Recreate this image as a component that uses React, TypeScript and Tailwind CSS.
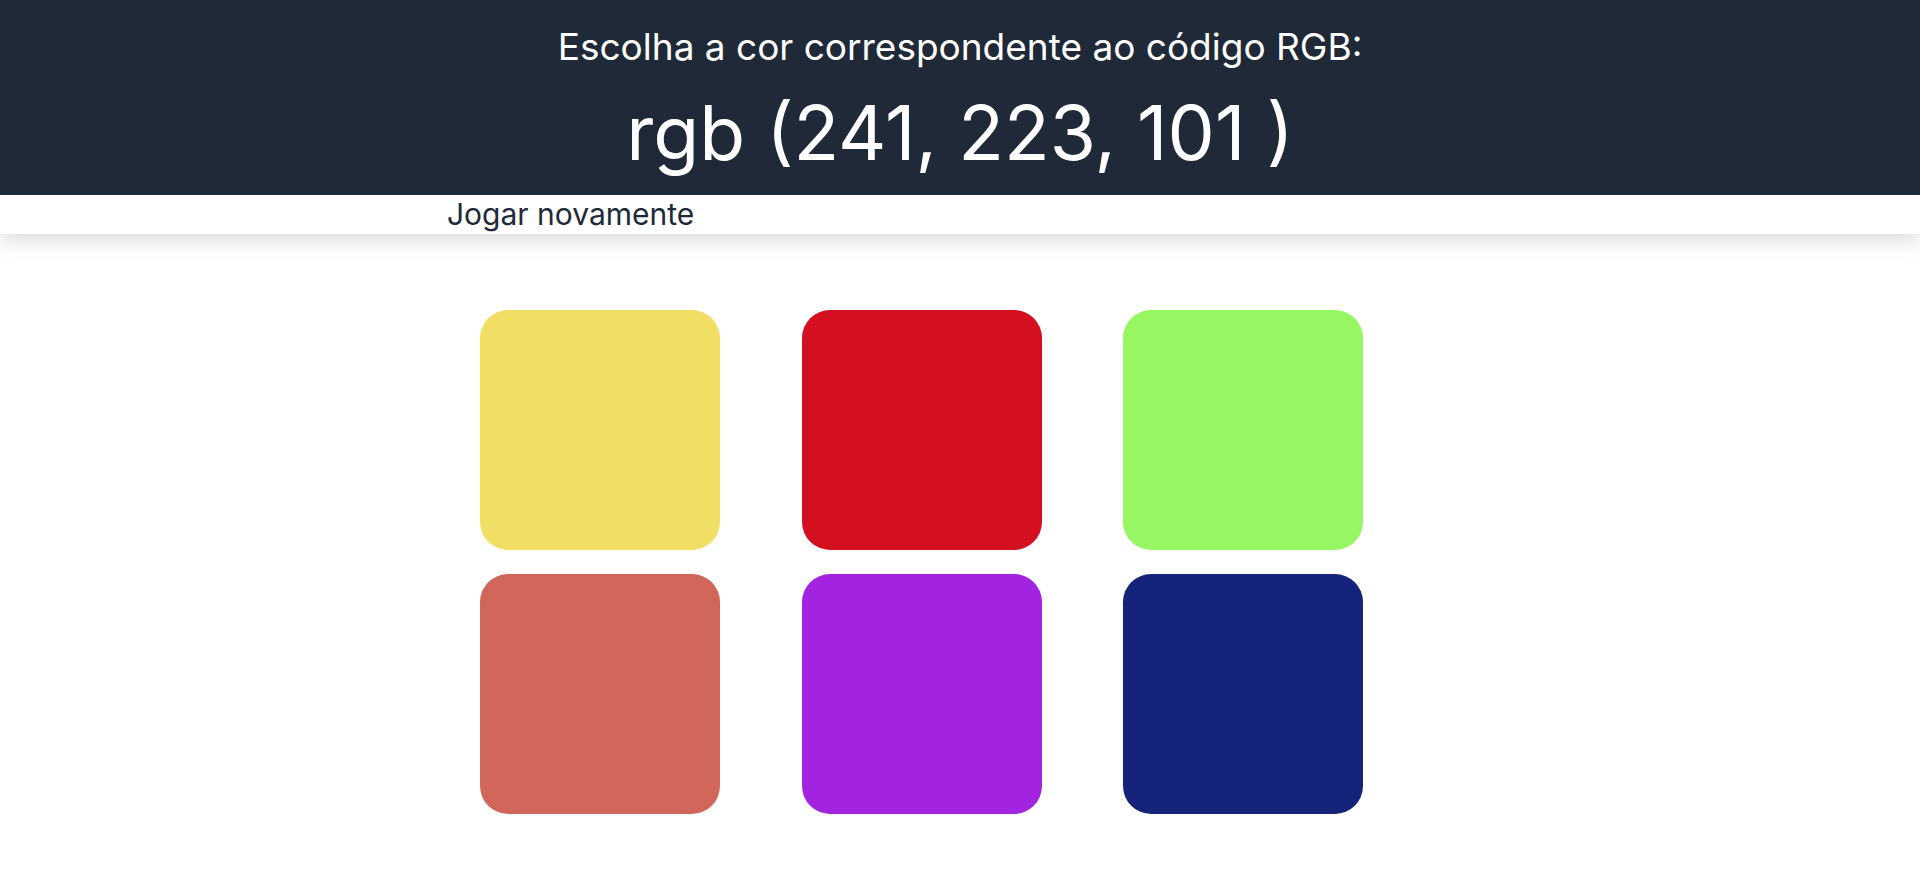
import React from "react";

const colors = [
  "#f1df65",
  "#d30f20",
  "#97f762",
  "#d2665a",
  "#a324e0",
  "#15237b",
];

export default function App() {
  return (
    <div
      className="min-h-screen bg-white"
      style={{ fontFamily: "Inter, 'Noto Sans', sans-serif" }}
    >
      <header className="shadow-[0_8px_18px_rgba(0,0,0,0.13)]">
        <div className="bg-[#1f2937] text-white text-center pt-[27px] pb-[25px]">
          <h1 className="text-[37px] leading-[40px] font-normal">
            Escolha a cor correspondente ao código RGB:
          </h1>
          <p className="mt-[28px] text-[75px] leading-[75px] font-normal">
            rgb (241, 223, 101 )
          </p>
        </div>
        <div className="bg-white h-[39px]">
          <div className="w-[1026px] mx-auto">
            <button className="text-[30px] leading-[36px] text-[#1f2937] pt-[1px] cursor-pointer">
              Jogar novamente
            </button>
          </div>
        </div>
      </header>
      <main className="w-[1026px] mx-auto pt-[76px]">
        <div className="ml-[33px] grid grid-cols-[repeat(3,240px)] gap-x-[81.5px] gap-y-[24px]">
          {colors.map((c) => (
            <div
              key={c}
              className="w-[240px] h-[240px] rounded-[28px]"
              style={{ backgroundColor: c }}
            />
          ))}
        </div>
      </main>
    </div>
  );
}
